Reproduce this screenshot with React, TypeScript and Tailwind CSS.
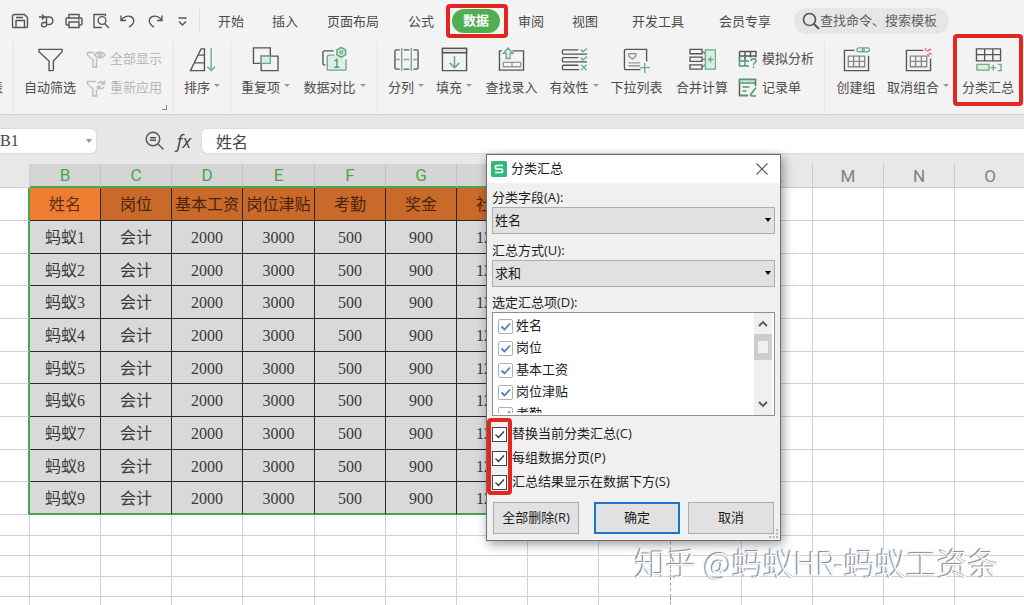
import React, { useState } from "react";

type IconProps = { children: React.ReactNode; className?: string; box?: string };

function Icon({ children, className = "h-[27px] w-[27px]", box = "0 0 28 28" }: IconProps) {
  return (
    <svg viewBox={box} className={`shrink-0 ${className}`} fill="none" stroke="#555" strokeWidth="1.4" aria-hidden="true">
      {children}
    </svg>
  );
}

const GREEN = "#6fa88a";
const MINT = "#dcefe4";

const quickActions = [
  { name: "保存", art: <><path d="M1.500 4.500a2 2 0 0 1 2-2h10l3 3v9a1 1 0 0 1-1 1h-13a1 1 0 0 1-1-1z" /><path d="M5 15.500v-7h8.500v7M5 5.500h7" /></> },
  { name: "输出", art: <><path d="M1 5h10.500a4 3.800 0 0 1 0 7.500H9M4 2.500 6.500 5 4 7.500M8.500 5v8a2.500 2.200 0 1 1-2.500-2.500h2.500" /></> },
  { name: "打印", art: <><path d="M4 6V2.500h10V6M4 13H2a1 1 0 0 1-1-1V7a1 1 0 0 1 1-1h14a1 1 0 0 1 1 1v5a1 1 0 0 1-1 1h-2" /><path d="M4 10h10v5.500H4zM13 8h1.500" /></> },
  { name: "打印预览", art: <><path d="M13.500 4V2.500H2v13h8" /><circle cx="10" cy="8.500" r="3.900" /><path d="m12.500 11.500 4.500 4.500" /></> },
  { name: "撤销", art: <path d="M2 3.500v5h5M2.500 8c2-3.500 6-4.500 9-3.500 4.500 1.800 4.500 7.500-1.500 10.500" /> },
  { name: "恢复", art: <path d="M16 3.500v5h-5M15.500 8c-2-3.500-6-4.500-9-3.500C2 6.300 2 12 8 15" /> },
  { name: "更多", art: <path d="M5.500 6h8M6 9.500l3.500 3.500L13 9.500" /> },
];

const tabs = [
  { label: "开始", width: "w-[54px]" },
  { label: "插入", width: "w-[54px]" },
  { label: "页面布局", width: "w-[82px]" },
  { label: "公式", width: "w-[54px]" },
  { label: "数据", width: "w-[56px]", active: true },
  { label: "审阅", width: "w-[54px]" },
  { label: "视图", width: "w-[54px]" },
  { label: "开发工具", width: "w-[92px]" },
  { label: "会员专享", width: "w-[82px]" },
];

const art = {
  filter: <path d="M2 3.500h24V6l-9 9.500v9a1 1 0 0 1-1 1h-3.500v-10L2 6z" />,
  sort: (
    <>
      <path d="M16 3v22.500H1.500L12.500 3zM10 9.500h6M6 17.500h10" />
      <path d="M23 2v23.500M19 21.500l4 4 4-4" stroke={GREEN} />
    </>
  ),
  duplicate: (
    <>
      <path d="M1.500 2h17.500v16H1.500z" />
      <path d="M9.500 10.500h17.500v15H9.500z" />
      <path d="M9.500 10.500H19V18H9.500z" fill="#d5eedf" stroke={GREEN} />
    </>
  ),
  compare: (
    <>
      <path d="M4.500 19.500H3a1 1 0 0 1-1-1V7a2 2 0 0 1 2-2h9" />
      <path d="M14 9.500H8.500a2 2 0 0 0-2 2V24a1 1 0 0 0 1 1H25a1 1 0 0 0 1-1V14" stroke={GREEN} fill={MINT} />
      <path d="m21 1.500 4.500 2.600v5L21 11.700l-4.500-2.600v-5z" stroke={GREEN} fill={MINT} strokeLinejoin="round" strokeWidth="1.700" />
      <circle cx="21" cy="6.600" r="1.600" stroke={GREEN} />
      <path d="m14 15.500 2.500-1.500v8M14 22h5" stroke="#5f8f76" />
    </>
  ),
  split: (
    <>
      <path d="M7 4H3.500A1.500 1.500 0 0 0 2 5.500v17A1.500 1.500 0 0 0 3.500 24H7M21 4h3.500A1.500 1.500 0 0 1 26 5.500v17a1.500 1.500 0 0 1-1.500 1.500H21M11 4h6M11 24h6" />
      <path d="M2 14h5M21 14h5M11 14h6" stroke="#999" />
      <path d="M9 2v24M19 2v24" stroke={GREEN} />
    </>
  ),
  fill: (
    <>
      <path d="M1.500 2.500h25v23h-25z" />
      <path d="M1.500 2.500h25V7h-25z" fill="#dedede" />
      <path d="M14 10.500v12M9 17.500l5 5 5-5" stroke={GREEN} strokeWidth="1.600" />
    </>
  ),
  lookup: (
    <>
      <path d="M4 5H1.500v20h25V5H15" />
      <path d="M8.500 13V7.500H5.500L10.500 2l5 5.500h-3V13z" stroke={GREEN} fill={MINT} />
      <path d="M5.500 17h18v4.500h-18zM14.500 17v4.500" stroke="#999" />
    </>
  ),
  validity: (
    <>
      <path d="M18 4H2.500a1 1 0 0 0-1 1v2.500a1 1 0 0 0 1 1H27M18 12H2.500a1 1 0 0 0-1 1v2.500a1 1 0 0 0 1 1H27M18 20H2.500a1 1 0 0 0-1 1v2.500a1 1 0 0 0 1 1H19" />
      <path d="m20.500 3.500 2 2.500L27 2.500M20.500 12l2 2.500L27 11M21 19.500l5.500 5.500M26.500 19.500 21 25" stroke={GREEN} />
    </>
  ),
  dropdown: (
    <>
      <path d="M18 24.500H3A1.500 1.500 0 0 1 1.500 23V5A1.500 1.500 0 0 1 3 3.500h21.500V16" />
      <path d="M6 8h7.500v2.500L9.800 13.500 6 10.500zM5.500 17.500h12M5.500 20.500h12" stroke="#999" />
      <path d="M22.500 17.500V28M17.500 22.500H28" stroke={GREEN} />
    </>
  ),
  merge: (
    <>
      <path d="M1 3.500h12.500V8H1zM1 11.500h12.500V16H1zM1 19.500h12.500V24H1z" />
      <path d="M13.500 5.500 17 8M13.500 14H17M13.500 22l3.500-2.500" stroke="#777" />
      <path d="M17 4h10.500v20H17z" fill="#d5eedf" stroke={GREEN} />
      <path d="M22.300 11v6M19.300 14h6" stroke={GREEN} />
    </>
  ),
  group: (
    <>
      <path d="M12 4.500H1.500v21h25V10" />
      <path d="M5.500 10.500h17v11h-17zM5.500 16h17M11 10.500v11M17 10.500v11" stroke="#888" />
      <rect x="14.500" y="2" width="7.500" height="4" rx="2" stroke={GREEN} />
      <rect x="20" y="2" width="7.500" height="4" rx="2" stroke={GREEN} />
    </>
  ),
  ungroup: (
    <>
      <path d="M19 4.500H1.500v21h25V13" />
      <path d="M5.500 10.500h17v11h-17zM5.500 16h17M11 10.500v11M17 10.500v11" stroke="#888" />
      <path d="m21 2 1 3M23 5.500 27 3M24.500 7.500l3.500 1M23 8.500l2.500 2.500" stroke="#d96a76" />
    </>
  ),
  subtotal: (
    <>
      <path d="M1.500 3h25v12.500h-25zM1.500 9h25M10 3v12.500M18.500 3v12.500" />
      <path d="M14.500 19H2v6h12.500z" fill={MINT} stroke={GREEN} />
      <path d="M16 22.500h6M19 19.500v6M23.500 19H27v6.500h-3.500" stroke={GREEN} />
    </>
  ),
};

function Caret() {
  return <span className="mb-1 ml-1 inline-block border-x-[3px] border-t-[3px] border-x-transparent border-t-[#999]" />;
}

function RibbonButton({ label, icon, width, menu, marked }: { label: string; icon: React.ReactNode; width: string; menu?: boolean; marked?: boolean }) {
  return (
    <button type="button" className={`relative flex shrink-0 flex-col items-center pt-[5px] ${width}`}>
      <Icon>{icon}</Icon>
      <span className="mt-1 flex h-5 items-center whitespace-nowrap leading-5">
        {label}
        {menu && <Caret />}
      </span>
      {marked && <Marker className="-top-[7px] bottom-2 left-0 right-0" />}
    </button>
  );
}

function SmallButton({ label, icon, disabled }: { label: string; icon: React.ReactNode; disabled?: boolean }) {
  return (
    <button type="button" disabled={disabled} className="flex h-[29px] items-center gap-1 whitespace-nowrap disabled:text-[#b8b8b8]">
      <Icon className="h-5 w-5" box="0 0 20 20">{icon}</Icon>
      {label}
    </button>
  );
}

function Marker({ className }: { className: string }) {
  return <span className={`pointer-events-none absolute rounded border-4 border-[#e3261f] ${className}`} />;
}

function TopBar() {
  return (
    <header className="flex h-[41px] items-center overflow-hidden pl-1.5">
      <div className="flex shrink-0">
        {quickActions.map((action) => (
          <button key={action.name} type="button" aria-label={action.name} className="flex w-[27px] justify-center">
            <Icon className="h-[18px] w-[18px]" box="0 0 18 18">{action.art}</Icon>
          </button>
        ))}
      </div>
      <span className="mx-1 h-6 w-px shrink-0 bg-[#e2e2e2]" />
      <nav className="flex shrink-0">
        {tabs.map((tab) => (
          <button key={tab.label} type="button" className={`relative flex justify-center whitespace-nowrap ${tab.width}`}>
            {tab.active ? (
              <>
                <span className="flex h-6 w-12 items-center justify-center rounded-full bg-[#4fae50] font-bold text-white">{tab.label}</span>
                <Marker className="-inset-y-[5px] -left-0.5 -right-1" />
              </>
            ) : (
              <span className="leading-6">{tab.label}</span>
            )}
          </button>
        ))}
      </nav>
      <label className="ml-2 flex h-[26px] w-[155px] shrink-0 items-center rounded-full bg-[#e6e6e7] pl-2">
        <Icon className="h-[18px] w-[18px]" box="0 0 18 18">
          <circle cx="7.500" cy="7.500" r="6" strokeWidth="1.700" />
          <path d="m12 12 5 5" strokeWidth="1.900" />
        </Icon>
        <input aria-label="搜索" placeholder="查找命令、搜索模板" className="w-full min-w-0 bg-transparent outline-none placeholder:text-[#5f5f5f]" />
      </label>
    </header>
  );
}

function Divider() {
  return <span className="h-[72px] w-px shrink-0 bg-[#e6e6e6]" />;
}

function Ribbon() {
  return (
    <section className="flex h-[74px] border-b border-[#d4d4d4]">
      <div className="flex w-[13px] shrink-0 overflow-hidden pt-9">
        <span className="-ml-2.5 leading-5">表</span>
      </div>
      <Divider />
      <RibbonButton label="自动筛选" icon={art.filter} width="w-[72px]" />
      <div className="relative flex w-[87px] shrink-0 flex-col pt-[3px]">
        <SmallButton disabled label="全部显示" icon={<g stroke="#bdbdbd"><path d="M8 3.500H1.500v2.500L7 11v7h3.500v-7l1-1" /><path d="M8.500 6c3-4 7.500-4 10.500 0-3 4-7.500 4-10.500 0z" /><circle cx="13.800" cy="6" r="1.500" /></g>} />
        <SmallButton disabled label="重新应用" icon={<g stroke="#bdbdbd"><path d="M10 3.500H1.500v2.500L7 11v7h3.500v-6" /><path d="M12 6c1-3 5-3 6 0M18.500 2.500v3.500H15M18 8.500c-1 3-5 3-6 0M11.500 12V8.500H15" /></g>} />
        <span className="absolute bottom-1 right-1.5 h-[5px] w-[5px] border-b border-r border-[#888]" />
      </div>
      <Divider />
      <RibbonButton label="排序" icon={art.sort} width="w-[56px]" menu />
      <Divider />
      <div className="flex shrink-0 pr-2">
        <RibbonButton label="重复项" icon={art.duplicate} width="w-[69px]" menu />
        <RibbonButton label="数据对比" icon={art.compare} width="w-[69px]" menu />
      </div>
      <Divider />
      <div className="flex shrink-0 pl-1">
        <RibbonButton label="分列" icon={art.split} width="w-[48px]" menu />
        <RibbonButton label="填充" icon={art.fill} width="w-[48px]" menu />
        <RibbonButton label="查找录入" icon={art.lookup} width="w-[67px]" />
        <RibbonButton label="有效性" icon={art.validity} width="w-[58px]" menu />
        <RibbonButton label="下拉列表" icon={art.dropdown} width="w-[67px]" />
        <RibbonButton label="合并计算" icon={art.merge} width="w-[64px]" />
        <div className="flex w-[90px] flex-col pl-1 pt-[3px]">
          <SmallButton label="模拟分析" icon={<><path d="M1.500 2.500h16.500v6M1.500 7H18M7 2.500V12M12.500 2.500v6M1.500 2.500V12" /><path d="M1.500 7v10H11M1.500 12H11M7 7v10" stroke="#4f9a70" /><path d="M13 12c0-3 5-3 5 0 0 2-2.500 1.500-2.500 4M15.500 17.500v1.500" stroke="#4f9a70" /></>} />
          <SmallButton label="记录单" icon={<><path d="M17.500 8V1.500h-16v16H10" /><path d="M1.500 1.500h16V5h-16z" fill="#cfe6d8" stroke="#4f9a70" /><path d="M4.500 9h7M4.500 13h4M1.500 17.500H9M12 17.500l6-8M13 18h5" stroke="#4f9a70" strokeWidth="1.600" /></>} />
        </div>
      </div>
      <Divider />
      <div className="flex shrink-0 pl-1">
        <RibbonButton label="创建组" icon={art.group} width="w-[54px]" />
        <RibbonButton label="取消组合" icon={art.ungroup} width="w-[70px]" menu />
        <RibbonButton label="分类汇总" icon={art.subtotal} width="w-[70px]" marked />
      </div>
    </section>
  );
}

const cellFont = "font-['Liberation_Serif','Noto_Sans_CJK_SC',serif]";

function FormulaBar() {
  return (
    <section className={`flex h-[39px] items-end bg-[#e7e7e7] ${cellFont} text-base text-[#444]`}>
      <div className="flex h-[26px] w-[97px] shrink-0 items-center rounded-r-md border border-l-0 border-[#dcdcdc] bg-white">
        <input aria-label="名称框" defaultValue="B1" className="w-20 min-w-0 outline-none" />
        <span className="ml-1.5 border-x-[3px] border-t-4 border-x-transparent border-t-[#999]" />
      </div>
      <button type="button" aria-label="缩小" className="ml-12 flex h-[26px] items-center">
        <Icon className="h-5 w-5" box="0 0 20 20">
          <circle cx="8" cy="8" r="6.800" />
          <path d="m13 13 5.500 5.500M5 6.800h6M5 9.300h6" />
        </Icon>
      </button>
      <button type="button" aria-label="插入函数" className="ml-2.5 h-[26px] w-[18px] font-['Open_Sans',sans-serif] text-lg italic leading-6">fx</button>
      <input aria-label="编辑栏" defaultValue="姓名" className="ml-2 h-[26px] min-w-0 flex-1 rounded-l-md border border-r-0 border-[#dcdcdc] bg-white pl-3.5 outline-none" />
    </section>
  );
}

const columns = ["B", "C", "D", "E", "F", "G", "H", "I", "J", "K", "L", "M", "N", "O"];
const headings = ["姓名", "岗位", "基本工资", "岗位津贴", "考勤", "奖金", "社保"];
const people = [1, 2, 3, 4, 5, 6, 7, 8, 9].map((n) => [`蚂蚁${n}`, "会计", "2000", "3000", "500", "900", "1200"]);
const rows = [headings, ...people];
const emptyRows = [0, 1, 2, 3, 4];

function gridBorder(column: string) {
  return column === "J" ? "border-r border-b border-b-[#d2d2d2] border-r-[#a5a5a5] [border-right-style:dashed]" : "border-r border-b border-[#d2d2d2]";
}

function Sheet() {
  return (
    <main className="overflow-hidden bg-[#e8e8e8] pt-2.5">
      <table className={`w-[1026px] min-w-full table-fixed border-separate border-spacing-0 text-center text-base text-[#3a3a3a] ${cellFont}`}>
        <colgroup>
          <col className="w-[30px]" />
          {columns.map((c) => (
            <col key={c} className={c === "E" || c === "J" ? "w-[72px]" : "w-[71px]"} />
          ))}
        </colgroup>
        <thead className="font-['Roboto',sans-serif] text-[17px] leading-5">
          <tr>
            <td className="h-6 border-b border-r border-[#cfcfcf]" />
            {columns.map((c, i) => (
              <th
                key={c}
                scope="col"
                className={i < headings.length ? "h-6 border-b-2 border-r border-b-[#4ba44b] border-r-[#c2c2c2] bg-[#d5d5d5] p-0 font-normal text-[#4ba44b]" : "h-6 border-b border-r border-[#cbcbcb] p-0 font-normal text-[#808080]"}
              >
                {c}
              </th>
            ))}
          </tr>
        </thead>
        <tbody className="bg-white leading-5">
          {rows.map((row, r) => (
            <tr key={r} className={r % 3 === 2 ? "h-8" : "h-[33px]"}>
              <td className="border-b border-r-2 border-b-[#d2d2d2] border-r-[#4ba44b] p-0" />
              {columns.map((c, i) => {
                if (i >= row.length) return <td key={c} className={`p-0 ${gridBorder(c)}`} />;
                const edge = r === rows.length - 1 ? "border-b-2 border-b-[#4ba44b]" : "border-b border-b-[#2a2a2a]";
                const fill = r > 0 ? "bg-[#d9d9d9]" : i === 0 ? "bg-[#ed7d31] text-[#5a2d0c]" : "bg-[#c9692a] text-[#4a240a]";
                return (
                  <td key={c} className={`whitespace-nowrap border-r border-r-[#2a2a2a] px-0 pb-0 pt-0.5 ${edge} ${fill}`}>
                    {row[i]}
                  </td>
                );
              })}
            </tr>
          ))}
          {emptyRows.map((r) => (
            <tr key={r} className={r % 2 ? "h-5" : "h-[21px]"}>
              <td className="border-b border-r border-[#d2d2d2] p-0" />
              {columns.map((c) => (
                <td key={c} className={`p-0 ${gridBorder(c)}`} />
              ))}
            </tr>
          ))}
        </tbody>
      </table>
    </main>
  );
}

function Tick({ label, soft }: { label: string; soft?: boolean }) {
  const [on, setOn] = useState(true);
  return (
    <label className={soft ? "flex h-[22px] shrink-0 items-center gap-[3px]" : "flex h-6 items-center gap-[5px]"}>
      <span className="relative h-[15px] w-[15px]">
        <input
          type="checkbox"
          checked={on}
          onChange={() => setOn(!on)}
          className={soft ? "block h-[15px] w-[15px] appearance-none rounded-[2px] border border-[#b0b0b0] bg-white" : "block h-[15px] w-[15px] appearance-none border border-[#444] bg-white"}
        />
        {on && (
          <svg viewBox="0 0 15 15" className="pointer-events-none absolute inset-0" fill="none" stroke={soft ? "#4d7fc0" : "#333"} strokeWidth={soft ? 1.8 : 1.3}>
            <path d="m3.500 7.500 3 3 5.500-6" />
          </svg>
        )}
      </span>
      {label}
    </label>
  );
}

function Choice({ id, label, options }: { id: string; label: string; options: string[] }) {
  return (
    <div>
      <label htmlFor={id} className="block leading-5">{label}</label>
      <div className="relative">
        <select id={id} className="block h-[27px] w-full appearance-none border border-[#adadad] bg-[#e1e1e1] pl-0.5 outline-none">
          {options.map((o) => (
            <option key={o}>{o}</option>
          ))}
        </select>
        <span className="pointer-events-none absolute right-1 top-[11px] border-x-[3px] border-t-4 border-x-transparent border-t-black" />
      </div>
    </div>
  );
}

function SubtotalDialog() {
  return (
    <div role="dialog" aria-labelledby="dialog-title" className="absolute left-[486px] top-[154px] w-[295px] border border-[#6e6e6e] bg-[#f0f0f0] text-[13px] text-[#1c1c1c] shadow-[2px_3px_10px_rgba(0,0,0,0.4)]">
      <div className="flex h-7 items-center bg-white pl-1">
        <svg viewBox="0 0 16 16" className="h-4 w-4" aria-hidden="true">
          <rect width="16" height="16" rx="1.500" fill="#2fba7b" />
          <path d="M12 4.500H5.500a1 1 0 0 0-1 1V7a1 1 0 0 0 1 1h5a1 1 0 0 1 1 1v1.500a1 1 0 0 1-1 1H4" fill="none" stroke="#fff" strokeWidth="1.700" />
        </svg>
        <h2 id="dialog-title" className="ml-1 flex-1">分类汇总</h2>
        <button type="button" aria-label="关闭" className="mr-3">
          <Icon className="h-3 w-3" box="0 0 12 12">
            <path d="m.5.5 11 11M11.500.5l-11 11" strokeWidth="1.100" />
          </Icon>
        </button>
      </div>
      <div className="relative px-[5px] pb-1.5 pt-1">
        <div className="flex flex-col gap-1.5">
          <Choice id="field" label="分类字段(A):" options={["姓名", "岗位"]} />
          <Choice id="method" label="汇总方式(U):" options={["求和", "计数"]} />
          <fieldset>
            <legend className="leading-[18px]">选定汇总项(D):</legend>
            <div className="mt-px flex h-[104px] border border-[#8f8f8f] bg-white">
              <div className="mb-0.5 flex flex-1 flex-col overflow-hidden pl-[5px] pt-0.5">
                {headings.slice(0, 5).map((h) => (
                  <Tick key={h} label={h} soft />
                ))}
              </div>
              <div className="mr-0.5 flex w-[18px] flex-col items-center bg-[#f0f0f0]">
                <button type="button" aria-label="向上" className="flex h-[21px] items-center">
                  <Icon className="h-2.5 w-2.5" box="0 0 10 10"><path d="m1 7 4-4 4 4" strokeWidth="1.800" /></Icon>
                </button>
                <span className="flex h-[26px] w-full items-center justify-center bg-[#cdcdcd]">
                  <span className="h-3 w-2.5 bg-[#f0f0f0]" />
                </span>
                <button type="button" aria-label="向下" className="mt-auto flex h-[22px] items-center">
                  <Icon className="h-2.5 w-2.5" box="0 0 10 10"><path d="m1 3 4 4 4-4" strokeWidth="1.800" /></Icon>
                </button>
              </div>
            </div>
          </fieldset>
        </div>
        <div className="relative mt-1.5">
          <Tick label="替换当前分类汇总(C)" />
          <Tick label="每组数据分页(P)" />
          <Tick label="汇总结果显示在数据下方(S)" />
          <Marker className="-bottom-px -left-[5px] -top-1 w-[25px]" />
        </div>
        <div className="mt-2 flex h-8 justify-between px-px">
          <button type="button" className="w-[86px] border border-[#adadad] bg-[#e1e1e1]">全部删除(R)</button>
          <button type="button" className="ml-[7px] w-[86px] border-2 border-[#1a75c8] bg-[#e1e1e1]">确定</button>
          <button type="button" className="w-[86px] border border-[#adadad] bg-[#e1e1e1]">取消</button>
        </div>
        <svg viewBox="0 0 9 9" className="absolute bottom-0.5 right-0.5 h-[9px] w-[9px]" fill="#b5b5b5" aria-hidden="true">
          <path d="M7 0h2v2H7zM3.500 3.500h2v2h-2zM7 3.500h2v2H7zM0 7h2v2H0zM3.500 7h2v2h-2zM7 7h2v2H7z" />
        </svg>
      </div>
    </div>
  );
}

export default function App() {
  return (
    <div className="relative h-screen overflow-hidden bg-[#f3f3f3] font-['Open_Sans','Noto_Sans_CJK_SC',sans-serif] text-[13px] text-[#4c4c4c]">
      <TopBar />
      <Ribbon />
      <FormulaBar />
      <Sheet />
      <SubtotalDialog />
      <p className="pointer-events-none absolute bottom-5 right-[25px] whitespace-nowrap font-['Noto_Sans_CJK_SC',sans-serif] text-[31px] font-light leading-[46px] text-white [text-shadow:-1px_-1px_1px_#888,-1px_0_1px_#999]">知乎 @蚂蚁HR-蚂蚁工资条</p>
    </div>
  );
}
